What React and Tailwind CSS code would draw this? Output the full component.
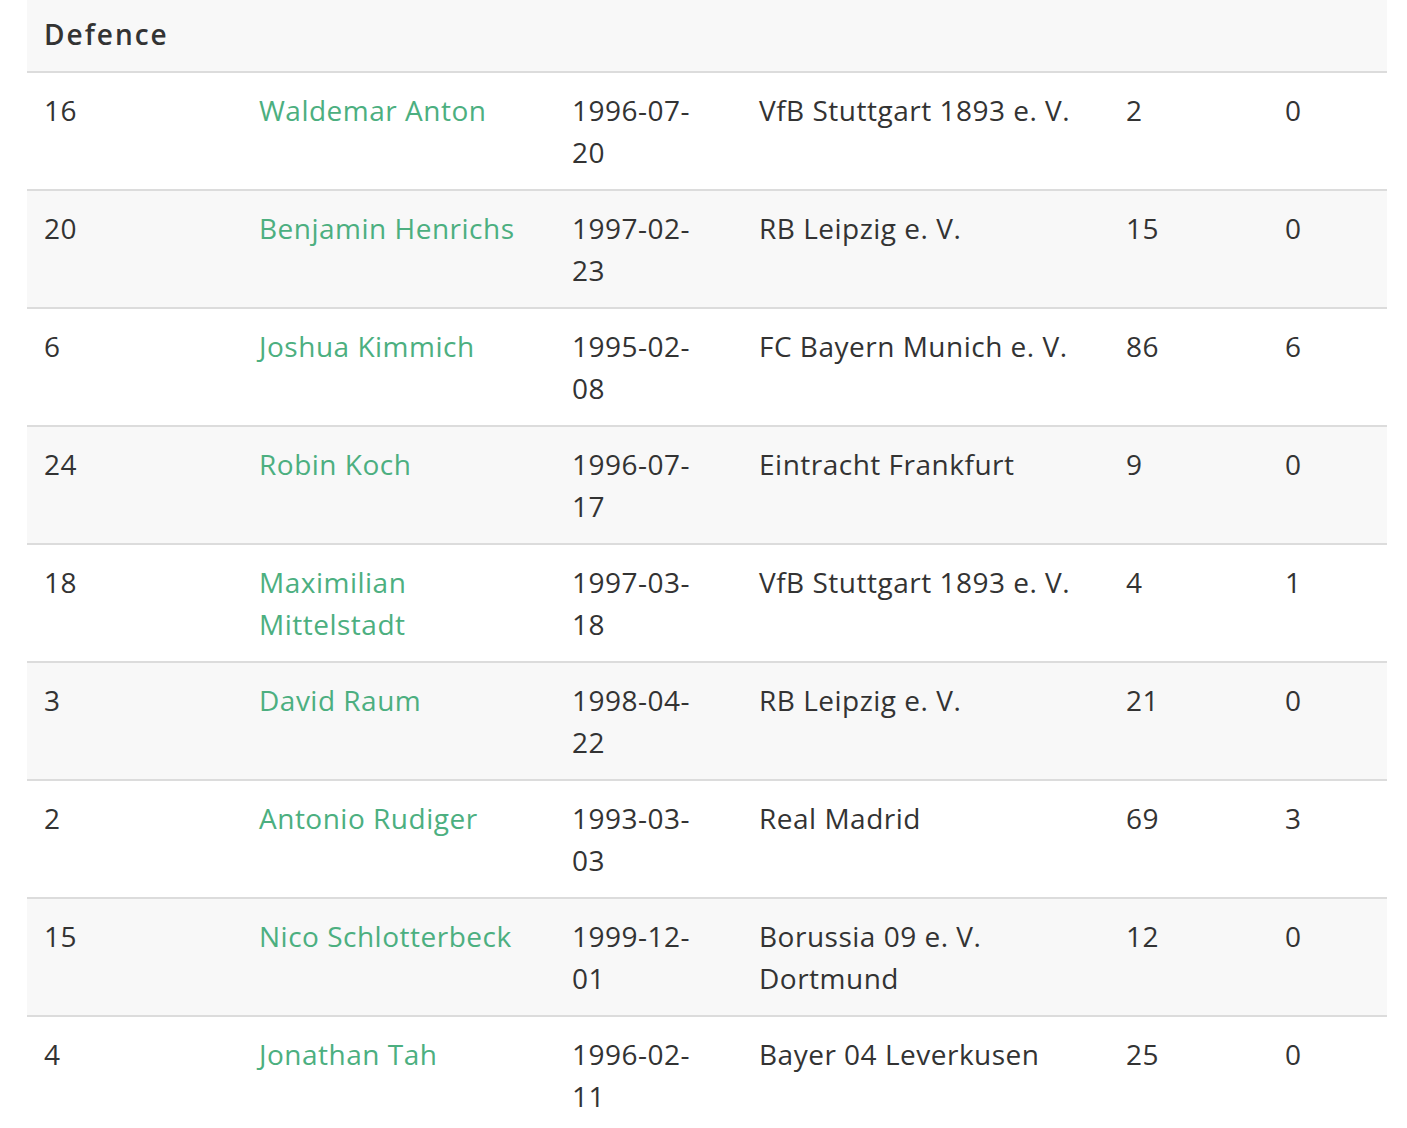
const players = [
  { no: "16", name: "Waldemar Anton", dob: "1996-07-20", club: "VfB Stuttgart 1893 e. V.", caps: "2", goals: "0" },
  { no: "20", name: "Benjamin Henrichs", dob: "1997-02-23", club: "RB Leipzig e. V.", caps: "15", goals: "0" },
  { no: "6", name: "Joshua Kimmich", dob: "1995-02-08", club: "FC Bayern Munich e. V.", caps: "86", goals: "6" },
  { no: "24", name: "Robin Koch", dob: "1996-07-17", club: "Eintracht Frankfurt", caps: "9", goals: "0" },
  { no: "18", name: "Maximilian Mittelstadt", dob: "1997-03-18", club: "VfB Stuttgart 1893 e. V.", caps: "4", goals: "1" },
  { no: "3", name: "David Raum", dob: "1998-04-22", club: "RB Leipzig e. V.", caps: "21", goals: "0" },
  { no: "2", name: "Antonio Rudiger", dob: "1993-03-03", club: "Real Madrid", caps: "69", goals: "3" },
  { no: "15", name: "Nico Schlotterbeck", dob: "1999-12-01", club: "Borussia 09 e. V. Dortmund", caps: "12", goals: "0" },
  { no: "4", name: "Jonathan Tah", dob: "1996-02-11", club: "Bayer 04 Leverkusen", caps: "25", goals: "0" },
];

export default function App() {
  return (
    <div className="bg-white min-h-screen pl-[27px] pr-[20px] font-['Open_Sans',sans-serif] text-[#333] text-[28px] leading-[42px] tracking-[0.5px]">
      <table className="table-fixed w-[1360px] border-collapse">
        <colgroup>
          <col className="w-[215px]" />
          <col className="w-[313px]" />
          <col className="w-[187px]" />
          <col className="w-[367px]" />
          <col className="w-[159px]" />
          <col className="w-[119px]" />
        </colgroup>
        <thead>
          <tr className="bg-[#f8f8f8] border-b-2 border-[#dcdcdc]">
            <th colSpan={6} className="text-left font-semibold px-[17px] pb-[3px] h-[72px] align-middle tracking-[2px]">
              Defence
            </th>
          </tr>
        </thead>
        <tbody>
          {players.map((p, i) => (
            <tr key={p.no} className={`border-b-2 border-[#dcdcdc] ${i % 2 ? "bg-[#f8f8f8]" : "bg-white"}`}>
              <td className="align-top px-[17px] pt-[16px] pb-[16px] h-[118px]">{p.no}</td>
              <td className="align-top px-[17px] pt-[16px] pb-[16px]">
                <a href="#" className="text-[#4caf80]">{p.name}</a>
              </td>
              <td className="align-top px-[17px] pt-[16px] pb-[16px]">
                <div className="w-[140px]">{p.dob}</div>
              </td>
              <td className="align-top px-[17px] pt-[16px] pb-[16px]">{p.club}</td>
              <td className="align-top px-[17px] pt-[16px] pb-[16px]">{p.caps}</td>
              <td className="align-top px-[17px] pt-[16px] pb-[16px]">{p.goals}</td>
            </tr>
          ))}
        </tbody>
      </table>
    </div>
  );
}
